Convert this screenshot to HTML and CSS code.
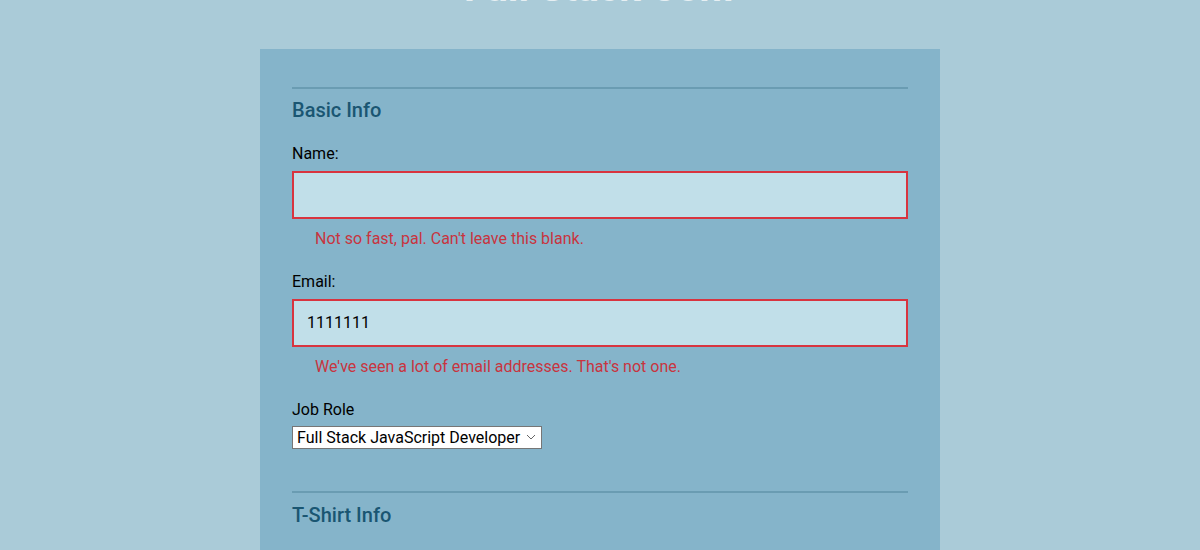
FILE: index.html
```html
<!DOCTYPE html>
<html lang="en">
<head>
<meta charset="utf-8">
<title>Full Stack Conf</title>
<link rel="stylesheet" href="styles.css">
</head>
<body>
<header class="site-header">
  <h1 class="site-title">Full Stack Conf</h1>
</header>
<main class="container">
  <form class="reg-form">
    <fieldset class="section">
      <h2 class="section-title">Basic Info</h2>
      <label class="field-label" for="name">Name:</label>
      <input class="text-input invalid" type="text" id="name">
      <p class="error-msg">Not so fast, pal. Can't leave this blank.</p>
      <label class="field-label spaced" for="mail">Email:</label>
      <input class="text-input invalid" type="text" id="mail" value="1111111">
      <p class="error-msg">We've seen a lot of email addresses. That's not one.</p>
      <label class="field-label spaced job" for="title">Job Role</label>
      <select class="select-input" id="title">
        <option>Full Stack JavaScript Developer</option>
      </select>
    </fieldset>
    <fieldset class="section next">
      <h2 class="section-title">T-Shirt Info</h2>
    </fieldset>
  </form>
</main>
</body>
</html>
```

FILE: styles.css
```css
html, body {
  margin: 0;
  padding: 0;
}
body {
  background: #aacbd8;
  font-family: Roboto, "Liberation Sans", sans-serif;
  color: #000;
  overflow: hidden;
}
.site-header {
  margin-top: -36px;
  height: 85px;
}
.site-title {
  margin: 0;
  text-align: center;
  font-size: 40px;
  line-height: 48px;
  font-weight: 700;
  color: #e6eff3;
}
.container {
  width: 680px;
  margin: 0 auto;
  background: #85b4ca;
  padding: 38px 32px 60px;
  box-sizing: border-box;
  min-height: 600px;
}
.section {
  border: none;
  border-top: 2px solid #6a9cb2;
  margin: 0;
  padding: 0;
  min-width: 0;
}
.section.next {
  margin-top: 42px;
}
.section-title {
  margin: 10px 0 0;
  font-size: 20px;
  font-weight: 500;
  line-height: 23.4px;
  color: #1a5672;
}
.section.next .section-title {
  margin-top: 11px;
}
.field-label {
  display: block;
  font-size: 16px;
  line-height: 18.75px;
  margin-top: 22.5px;
  margin-bottom: 7px;
}
.field-label.spaced {
  margin-top: 24.5px;
  margin-bottom: 7px;
}
.field-label.job {
  margin-bottom: 6px;
}
.text-input {
  display: block;
  width: 100%;
  height: 48px;
  box-sizing: border-box;
  margin: 0;
  padding: 0 13px;
  background: #c1dfe9;
  border: 2px solid #c1dfe9;
  font-family: Roboto, "Liberation Sans", sans-serif;
  font-size: 16px;
  color: #000;
  outline: none;
}
.text-input.invalid {
  border-color: #d8343f;
}
.error-msg {
  margin: 11px 0 0;
  padding-left: 23px;
  font-size: 16px;
  line-height: 18.75px;
  color: #c8343f;
}
.select-input {
  display: block;
  margin: 0;
  -webkit-appearance: none;
  appearance: none;
  box-sizing: border-box;
  width: 250px;
  height: 23px;
  padding: 0 20px 0 4px;
  font-family: Roboto, "Liberation Sans", sans-serif;
  font-size: 16px;
  line-height: 21px;
  color: #000;
  border: 1px solid #767676;
  border-radius: 0;
  background: #fff url("data:image/svg+xml;utf8,<svg xmlns='http://www.w3.org/2000/svg' width='10' height='6' viewBox='0 0 10 6'><path d='M1 1l4 4 4-4' fill='none' stroke='%23666' stroke-width='1'/></svg>") no-repeat right 5px center;
}
```
